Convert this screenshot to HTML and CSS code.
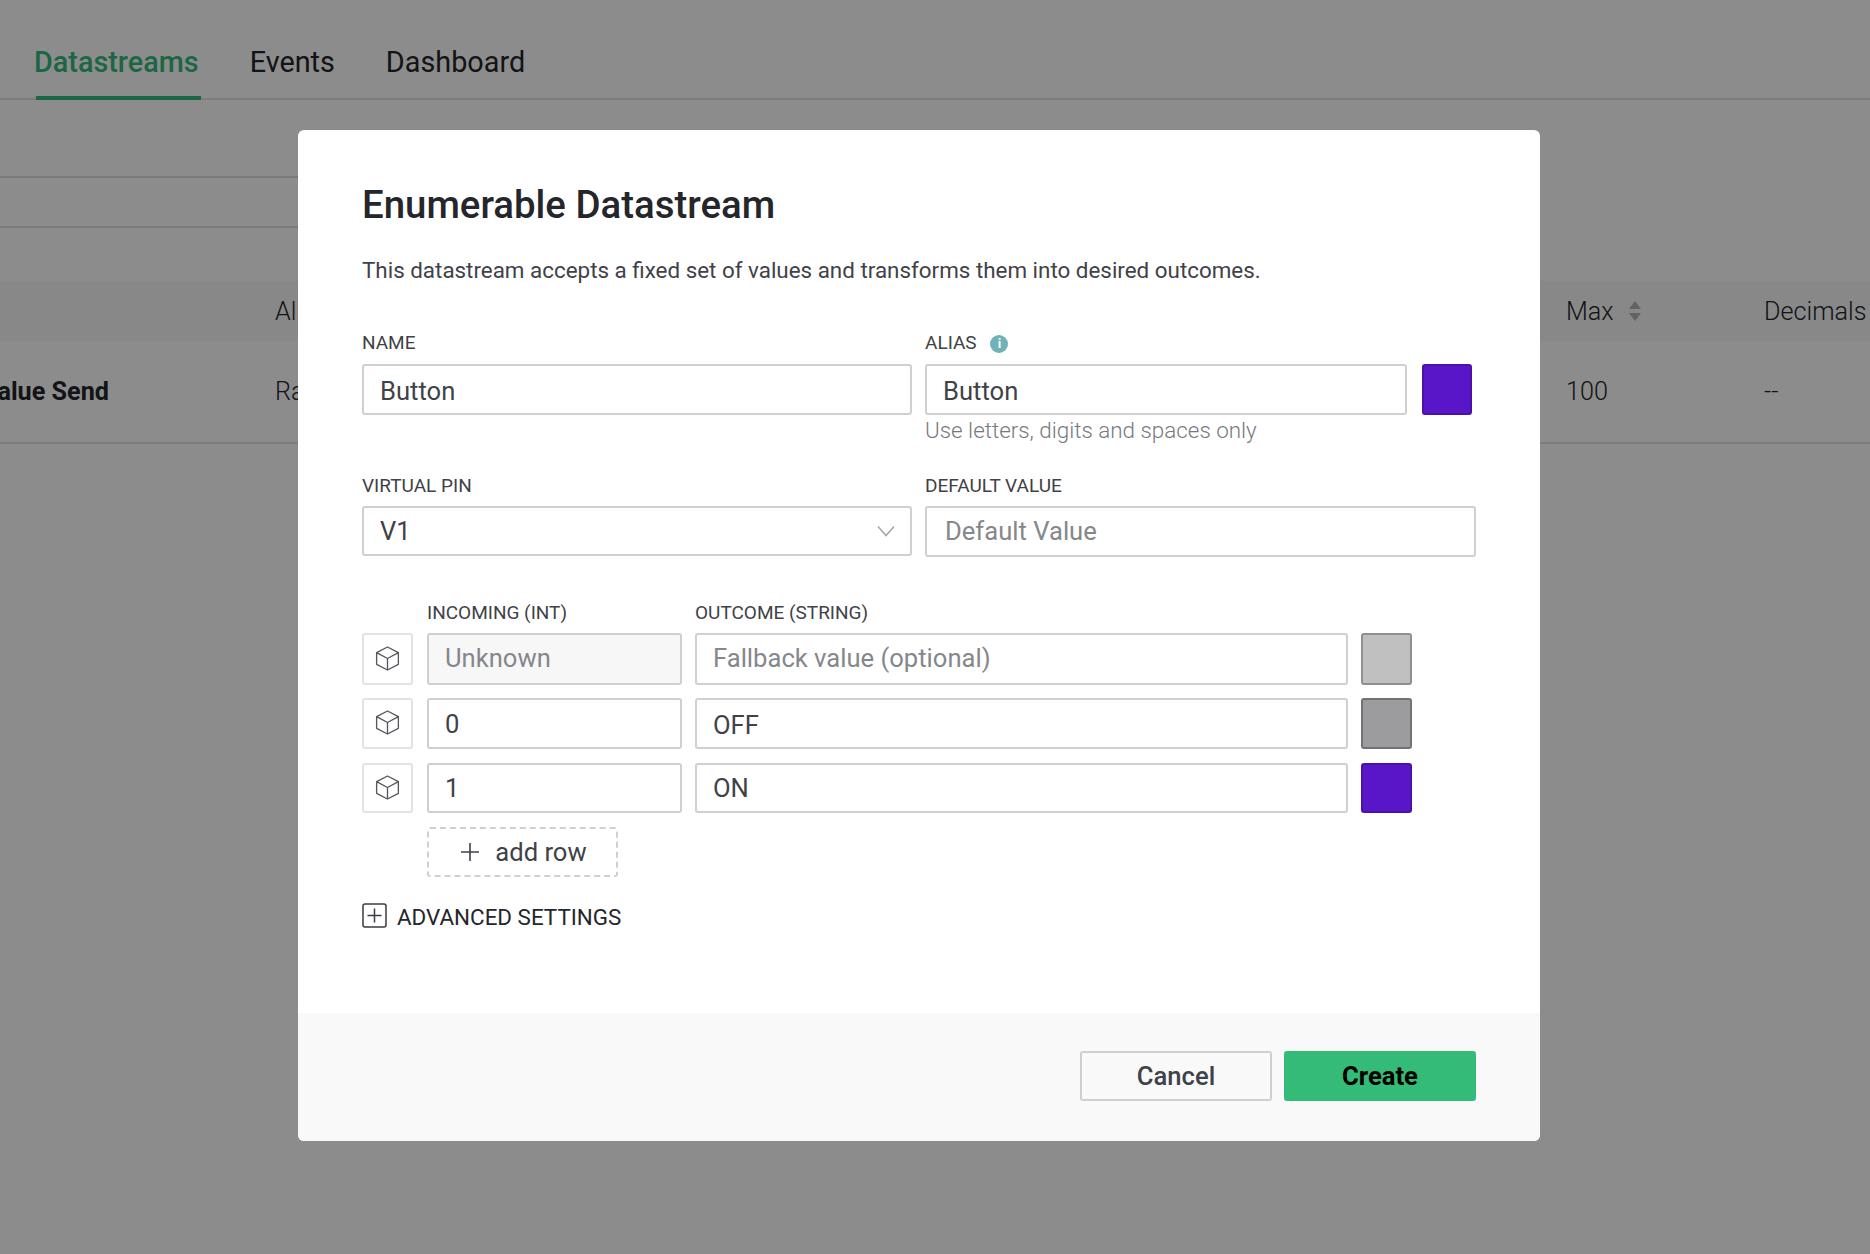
FILE: index.html
```html
<!DOCTYPE html>
<html lang="en">
<head>
    <meta charset="UTF-8">
    <meta name="viewport" content="width=device-width, initial-scale=1.0">
    <title>Enumerable Datastream</title>
    <link rel="stylesheet" href="styles.css">
</head>
<body>

    <nav class="tabs">
        <a class="tab tab-active">Datastreams</a>
        <a class="tab">Events</a>
        <a class="tab">Dashboard</a>
    </nav>

    <div class="toolbar"></div>
    <div class="search-row"></div>

    <div class="table-head">
        <span class="col-name"></span>
        <span class="col-alias">Alias</span>
        <span class="col-max">Max <svg class="sort-icon" viewBox="0 0 14 22"><path d="M7 1l6 8H1zM7 21l-6-8h12z"/></svg></span>
        <span class="col-dec">Decimals</span>
    </div>
    <div class="table-row">
        <span class="col-name"><b>Value Send</b></span>
        <span class="col-alias">Raw</span>
        <span class="col-max">100</span>
        <span class="col-dec">--</span>
    </div>

    <div class="overlay"></div>

    <div class="modal">
        <div class="modal-body">
            <h2>Enumerable Datastream</h2>
            <p class="intro">This datastream accepts a fixed set of values and transforms them into desired outcomes.</p>

            <div class="form-grid">
                <div class="field field-top">
                    <label>NAME</label>
                    <input class="input-low" type="text" value="Button">
                </div>
                <div class="field field-top">
                    <label>ALIAS <span class="info">i</span></label>
                    <div class="with-swatch">
                        <input class="input-low" type="text" value="Button">
                        <span class="swatch swatch-alias purple"></span>
                    </div>
                    <div class="hint">Use letters, digits and spaces only</div>
                </div>
                <div class="field">
                    <label>VIRTUAL PIN</label>
                    <div class="select">
                        <span>V1</span>
                        <svg class="chevron" viewBox="0 0 18 12"><path d="M1 1.5l8 9 8-9"/></svg>
                    </div>
                </div>
                <div class="field">
                    <label>DEFAULT VALUE</label>
                    <input class="input-default" type="text" placeholder="Default Value">
                </div>
            </div>

            <div class="enum-head">
                <label class="enum-in">INCOMING (INT)</label>
                <label>OUTCOME (STRING)</label>
            </div>
            <div class="enum-row enum-row-first">
                <span class="cube"><svg viewBox="0 0 24 24"><path d="M12 2.5l9 4.7v9.6l-9 4.7-9-4.7V7.200zM3 7.200l9 4.800 9-4.800M12 12v9.500"/></svg></span>
                <input class="enum-value disabled" type="text" placeholder="Unknown" disabled>
                <input class="enum-outcome" type="text" placeholder="Fallback value (optional)">
                <span class="swatch light"></span>
            </div>
            <div class="enum-row">
                <span class="cube"><svg viewBox="0 0 24 24"><path d="M12 2.5l9 4.7v9.6l-9 4.7-9-4.7V7.200zM3 7.200l9 4.800 9-4.800M12 12v9.500"/></svg></span>
                <input class="enum-value" type="text" value="0">
                <input class="enum-outcome input-low" type="text" value="OFF">
                <span class="swatch mid"></span>
            </div>
            <div class="enum-row enum-row-last">
                <span class="cube"><svg viewBox="0 0 24 24"><path d="M12 2.5l9 4.7v9.6l-9 4.7-9-4.7V7.200zM3 7.200l9 4.800 9-4.800M12 12v9.500"/></svg></span>
                <input class="enum-value" type="text" value="1">
                <input class="enum-outcome" type="text" value="ON">
                <span class="swatch purple"></span>
            </div>

            <button class="add-row">
                <svg viewBox="0 0 20 20"><path d="M10 1v18M1 10h18"/></svg>
                add row
            </button>

            <div class="advanced">
                <svg viewBox="0 0 25 25"><rect x="1" y="1" width="23" height="23" rx="2"/><path d="M12.500 5.500v14M5.500 12.500h14"/></svg>
                ADVANCED SETTINGS
            </div>
        </div>

        <div class="modal-footer">
            <button class="btn btn-cancel">Cancel</button>
            <button class="btn btn-create">Create</button>
        </div>
    </div>

</body>
</html>
```

FILE: styles.css
```css
* {
    box-sizing: border-box;
}

html, body {
    margin: 0;
    height: 100%;
}

body {
    position: relative;
    height: 1254px;
    overflow: hidden;
    background-color: #fff;
    color: #24262b;
    font-family: Roboto, "Liberation Sans", sans-serif;
}

/* Page behind the dialog */
.tabs {
    display: flex;
    height: 100px;
    padding-left: 34px;
    border-bottom: 2px solid #e4e4e4;
}

.tab {
    margin-right: 51px;
    padding-top: 44px;
    font-size: 28.800px;
    line-height: 36px;
}

.tab-active {
    position: relative;
    color: #34bc7a;
    font-weight: 500;
}

.tab-active::after {
    content: "";
    position: absolute;
    left: 2px;
    right: -2px;
    top: 96px;
    height: 4px;
    background-color: #34bc7a;
}

.toolbar {
    width: 1000px;
    height: 78px;
    border-bottom: 2px solid #dedede;
}

.search-row {
    width: 1000px;
    height: 50px;
    border-bottom: 2px solid #dedede;
}

.table-head,
.table-row {
    display: flex;
    align-items: center;
    font-size: 25.200px;
    font-weight: 300;
}

.table-head {
    height: 60px;
    margin-top: 53px;
    background-color: #f7f7f7;
}

.table-row {
    height: 103px;
    border-bottom: 2px solid #e4e4e4;
}

.col-name {
    display: flex;
    justify-content: flex-end;
    width: 109px;
    margin-right: 166px;
    overflow: hidden;
    white-space: nowrap;
}

.col-name b {
    font-weight: 700;
    flex-shrink: 0;
}

.col-alias {
    width: 1291px;
}

.col-max {
    display: flex;
    align-items: center;
    width: 198px;
    gap: 14px;
}

.sort-icon {
    width: 14px;
    height: 22px;
    fill: #b5b5b5;
}

.col-dec {
    white-space: nowrap;
}

.overlay {
    position: absolute;
    inset: 0;
    background-color: rgba(0, 0, 0, 0.45);
}

/* Dialog */
.modal {
    position: absolute;
    left: 298px;
    top: 130px;
    width: 1242px;
    height: 1011px;
    display: flex;
    flex-direction: column;
    background-color: #fff;
    border-radius: 6px;
    overflow: hidden;
}

.modal-body {
    flex: 1;
    padding: 52px 64px 0 64px;
}

h2 {
    margin: 0;
    font-size: 38.400px;
    line-height: 46px;
    font-weight: 500;
    color: #24262b;
}

.intro {
    margin: 27px 0 0 0;
    font-size: 22.400px;
    line-height: 30px;
    color: #3f4248;
}

label {
    display: block;
    height: 24px;
    padding-top: 1px;
    font-size: 19px;
    line-height: 24px;
    color: #3f4248;
}

input {
    display: block;
    width: 100%;
    height: 51px;
    padding: 0 16px;
    background-color: #fff;
    border: 2px solid #d0d0d0;
    border-radius: 3px;
    color: #3f4248;
    font-family: Roboto, "Liberation Sans", sans-serif;
    font-size: 25.600px;
    outline: none;
}

input::placeholder {
    color: #85878c;
    opacity: 1;
}

.input-low {
    padding-top: 3px;
}

.input-default {
    padding-left: 18px;
    padding-bottom: 2px;
}

.form-grid {
    display: grid;
    grid-template-columns: 550px 551px;
    grid-template-rows: 143px 99px;
    column-gap: 13px;
    margin-top: 45px;
}

.field label {
    margin-bottom: 9px;
}

.field-top label {
    margin-bottom: 10px;
}

.with-swatch {
    display: flex;
    gap: 15px;
}

.with-swatch input {
    width: 482px;
}

.hint {
    margin-top: 1px;
    font-size: 22.400px;
    line-height: 28px;
    font-weight: 300;
    color: #77797e;
}

.info {
    display: inline-block;
    width: 18px;
    height: 18px;
    margin-left: 9px;
    border-radius: 50%;
    background-color: #6fb3b8;
    color: #fff;
    font-size: 13px;
    font-weight: 700;
    line-height: 18px;
    text-align: center;
    vertical-align: 1px;
}

.select {
    display: flex;
    align-items: center;
    justify-content: space-between;
    height: 50px;
    padding: 0 15px 0 16px;
    border: 2px solid #d0d0d0;
    border-radius: 3px;
    color: #3f4248;
    font-size: 25.600px;
}

.chevron {
    width: 18px;
    height: 12px;
    fill: none;
    stroke: #a5a5a5;
    stroke-width: 1.500;
}

.swatch {
    flex-shrink: 0;
    width: 51px;
    height: 51px;
    border: 2px solid;
    border-radius: 3px;
}

.swatch-alias {
    width: 50px;
}

.purple {
    background-color: #5816c8;
    border-color: #4a12a8;
}

.light {
    background-color: #c0c0c0;
    border-color: #8f8f8f;
}

.mid {
    background-color: #9c9c9e;
    border-color: #727274;
}

.enum-head {
    display: flex;
    margin-top: 28px;
    margin-bottom: 9px;
    padding-left: 65px;
}

.enum-in {
    width: 268px;
}

.enum-row {
    display: flex;
    gap: 13px;
    margin-bottom: 14px;
}

.enum-row-first {
    margin-bottom: 13px;
}

.enum-row-first input,
.enum-row-first .swatch,
.enum-row-first .cube {
    height: 52px;
}

.enum-row-first input {
    padding-bottom: 2px;
}

.enum-row-last input,
.enum-row-last .swatch,
.enum-row-last .cube {
    height: 50px;
}

.cube {
    display: flex;
    align-items: center;
    justify-content: center;
    flex-shrink: 0;
    width: 51px;
    height: 51px;
    margin-right: 1px;
    border: 2px solid #e2e2e2;
    border-radius: 3px;
}

.cube svg {
    width: 29px;
    height: 29px;
    margin-bottom: 2px;
    fill: none;
    stroke: #55575c;
    stroke-width: 1.100;
    stroke-linejoin: round;
}

.enum-value {
    width: 255px;
    flex-shrink: 0;
}

.enum-outcome {
    width: 653px;
    flex-shrink: 0;
}

.disabled {
    background-color: #f7f7f7;
}

.add-row {
    display: flex;
    align-items: center;
    justify-content: center;
    gap: 15px;
    width: 191px;
    height: 50px;
    margin: 1px 0 0 65px;
    padding: 0 0 0 2px;
    background: none;
    border: 2px dashed #d0d0d0;
    border-radius: 3px;
    color: #3f4248;
    font-family: inherit;
    font-size: 25.600px;
}

.add-row svg {
    width: 20px;
    height: 20px;
    fill: none;
    stroke: #3f4248;
    stroke-width: 1.600;
}

.advanced {
    display: flex;
    align-items: center;
    gap: 10px;
    margin-top: 26px;
    font-size: 22.400px;
    line-height: 26px;
    color: #24262b;
}

.advanced svg {
    width: 25px;
    height: 25px;
    margin-bottom: 2px;
    fill: none;
    stroke: #3a3c41;
    stroke-width: 1.500;
}

.modal-footer {
    display: flex;
    justify-content: flex-end;
    gap: 12px;
    height: 128px;
    padding: 38px 64px 0 0;
    background-color: #f9f9f9;
}

.btn {
    width: 192px;
    height: 50px;
    border-radius: 3px;
    font-family: inherit;
    font-size: 25.600px;
    font-weight: 500;
}

.btn-cancel {
    background-color: #f9f9f9;
    border: 2px solid #cfcfcf;
    color: #3f4248;
}

.btn-create {
    background-color: #33bb77;
    border: none;
    color: #000;
    font-weight: 700;
}
```
